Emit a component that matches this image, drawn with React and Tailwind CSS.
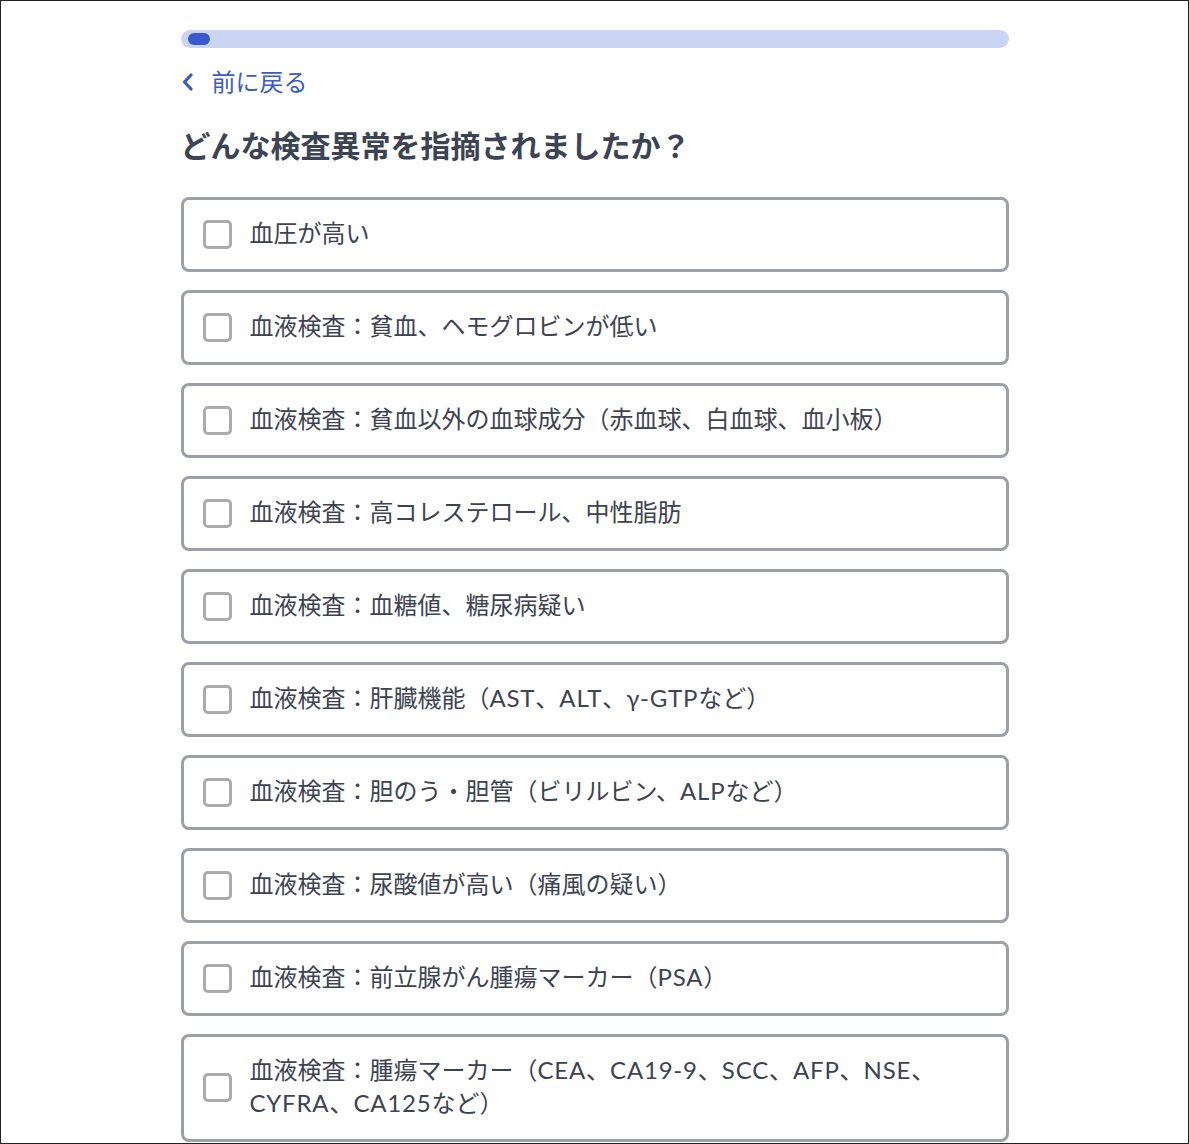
import React from "react";

const items = [
  "血圧が高い",
  "血液検査：貧血、ヘモグロビンが低い",
  "血液検査：貧血以外の血球成分（赤血球、白血球、血小板）",
  "血液検査：高コレステロール、中性脂肪",
  "血液検査：血糖値、糖尿病疑い",
  "血液検査：肝臓機能（AST、ALT、γ-GTPなど）",
  "血液検査：胆のう・胆管（ビリルビン、ALPなど）",
  "血液検査：尿酸値が高い（痛風の疑い）",
  "血液検査：前立腺がん腫瘍マーカー（PSA）",
  "血液検査：腫瘍マーカー（CEA、CA19-9、SCC、AFP、NSE、CYFRA、CA125など）",
];

function Runs({ text }) {
  const parts = text.split(/([A-Za-z0-9γ\-]+)/);
  return parts.map((p, i) =>
    i % 2 === 1 ? (
      <span key={i} className="tracking-[0.8px]">
        {p}
      </span>
    ) : (
      <React.Fragment key={i}>{p}</React.Fragment>
    )
  );
}

export default function App() {
  return (
    <div
      className="box-border h-[1144px] w-full overflow-hidden border border-[#222] bg-white"
      style={{ fontFamily: 'Lato, "Noto Sans CJK JP", sans-serif' }}
    >
      <div className="mx-auto w-[828px] pt-[29px]">
        <div className="flex h-[18px] items-center rounded-full bg-[#cad4f3] px-[7px]">
          <div className="h-[12px] w-[22px] rounded-full bg-[#3a5acc]" />
        </div>
        <div className="mt-[17px] flex h-[33px] items-center text-[24px] leading-[33px] text-[#3b5bcc]">
          <svg width="13" height="18" viewBox="0 0 13 18" className="shrink-0">
            <path d="M10 2 L3.5 9 L10 16" fill="none" stroke="#3b5bcc" strokeWidth="3.2" strokeLinecap="round" strokeLinejoin="round" />
          </svg>
          <span className="ml-[18px]">前に戻る</span>
        </div>
        <h1 className="mt-[25px] text-[30px] font-bold leading-[45px] text-[#3c4352]">
          どんな検査異常を指摘されましたか？
        </h1>
        <div className="mt-[29px] flex flex-col gap-[18px]">
          {items.map((t) => (
            <label
              key={t}
              className="flex items-center gap-[18px] rounded-[8px] border-[3px] border-[#9c9fa7] pt-[16px] pb-[17px] pl-[19px] pr-[20px]"
            >
              <span className="box-border h-[29px] w-[29px] shrink-0 rounded-[5px] border-[3px] border-[#ababab] bg-white" />
              <span className="pb-[3px] text-[24px] leading-[33px] text-[#3d4351]">
                <Runs text={t} />
              </span>
            </label>
          ))}
        </div>
      </div>
    </div>
  );
}
